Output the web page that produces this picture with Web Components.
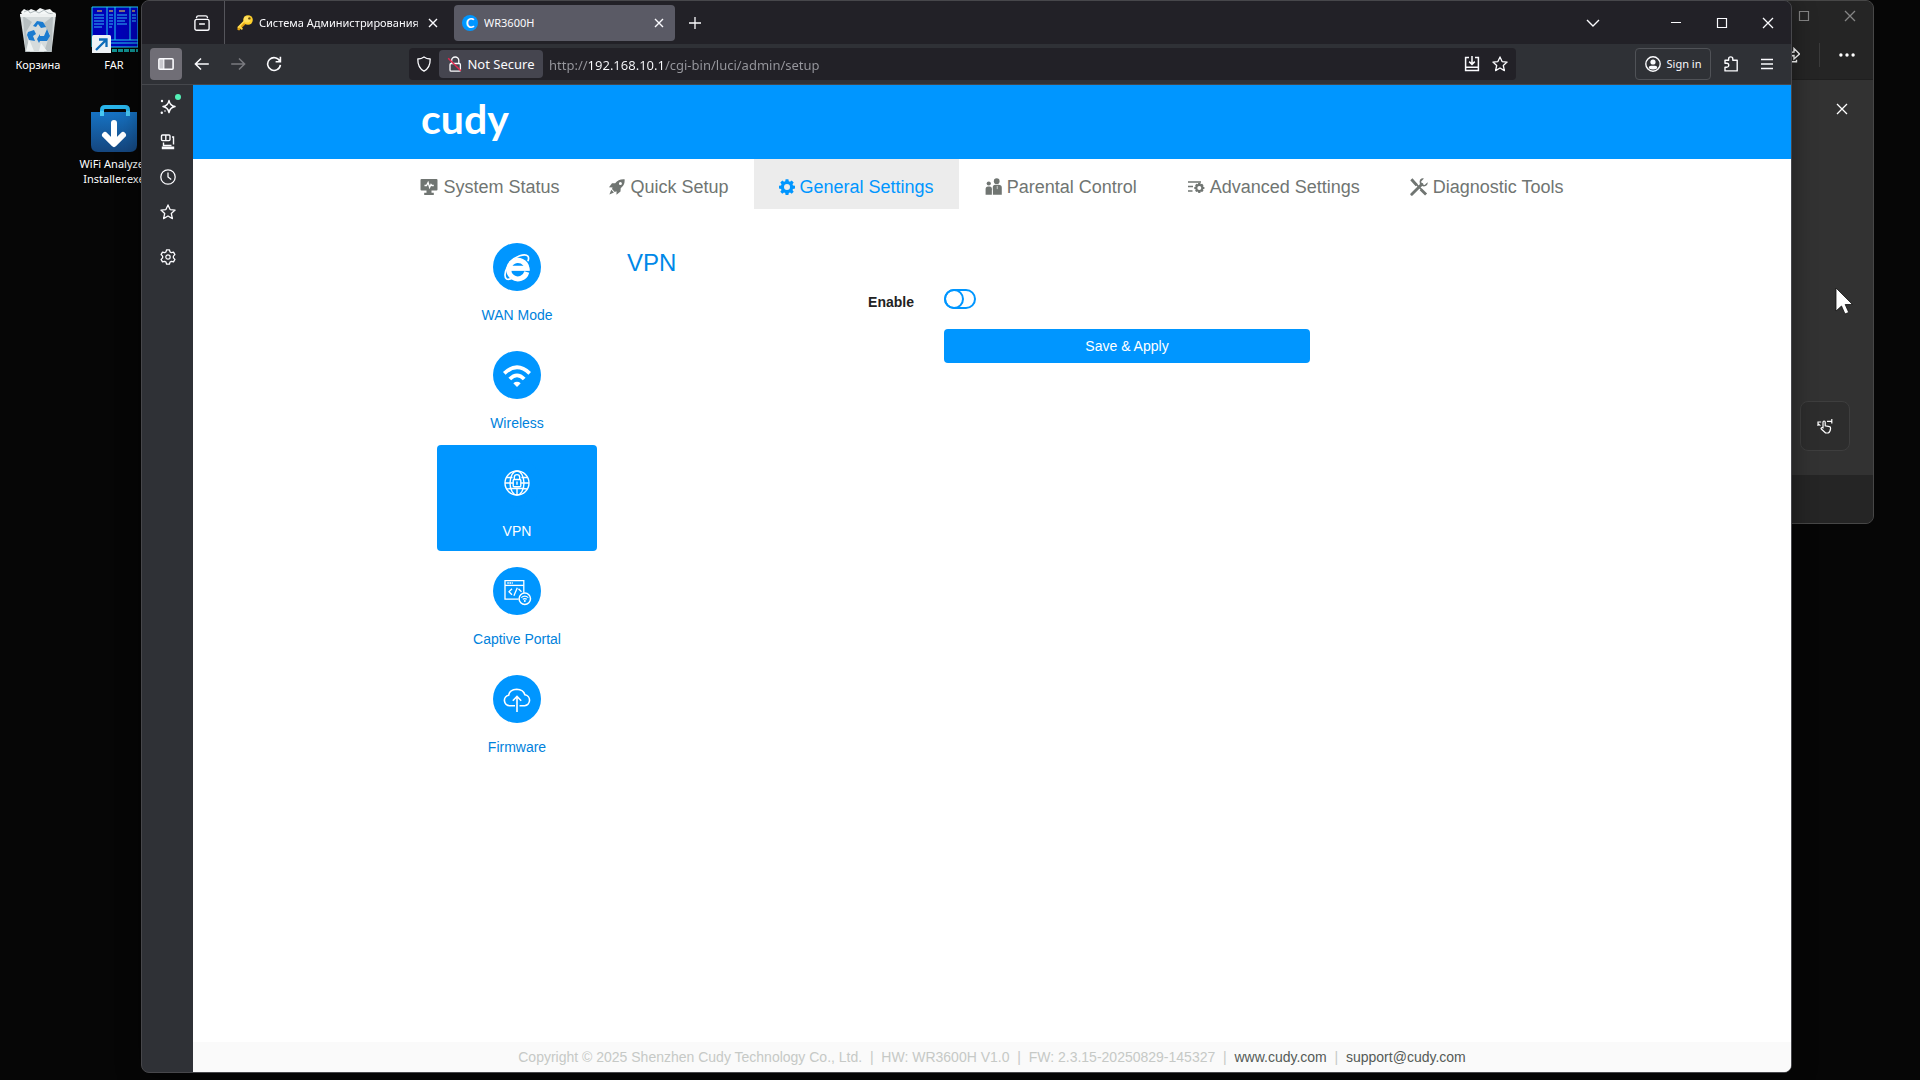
<!DOCTYPE html>
<html lang="ru">
<head>
<meta charset="utf-8">
<meta name="viewport" content="width=device-width, initial-scale=1">
<title>WR3600H</title>
<style>
    html, body {
        height: 100%;
        margin: 0;
        overflow: hidden;
        background: #060606;
    }
    body {
        font-family: "Noto Sans", "Open Sans", sans-serif;
        font-size: 11px;
    }
</style>
</head>
<body>
<desk-top>
    <desk-icon icon="bin" style="left: 0; top: 5px">Корзина</desk-icon>
    <desk-icon icon="far" style="left: 76px; top: 5px">FAR</desk-icon>
    <desk-icon icon="bag" style="left: 76px; top: 104px">WiFi Analyzer Installer.exe</desk-icon>

    <back-window></back-window>

    <browser-window>
        <browser-tab slot="tabs" favicon="key">Система Администрирования</browser-tab>
        <browser-tab slot="tabs" favicon="cudy" active>WR3600H</browser-tab>

        <router-page>
            <nav-item slot="nav" icon="monitor" wide>System Status</nav-item>
            <nav-item slot="nav" icon="rocket">Quick Setup</nav-item>
            <nav-item slot="nav" icon="gear" active>General Settings</nav-item>
            <nav-item slot="nav" icon="people" wide>Parental Control</nav-item>
            <nav-item slot="nav" icon="listgear" wide>Advanced Settings</nav-item>
            <nav-item slot="nav" icon="tools" wide>Diagnostic Tools</nav-item>

            <menu-item slot="menu" icon="ie">WAN Mode</menu-item>
            <menu-item slot="menu" icon="wifi">Wireless</menu-item>
            <menu-item slot="menu" icon="globe" active>VPN</menu-item>
            <menu-item slot="menu" icon="portal">Captive Portal</menu-item>
            <menu-item slot="menu" icon="cloud">Firmware</menu-item>

            <vpn-form></vpn-form>
        </router-page>
    </browser-window>

    <mouse-cursor></mouse-cursor>
</desk-top>

<script>
// icon name -> [viewBox, markup]
const ICONS = {
    // browser chrome
    archive: ['0 0 16 16', '<g fill="none" stroke="currentColor" stroke-width="1.4" stroke-linecap="round"><path d="M2.5 2.6Q2.8 .9 4.2 .9h7.6q1.4 0 1.7 1.7"/><rect x=".9" y="4.4" width="14.2" height="10.8" rx="1.8"/><path d="M5.6 9h4.8"/></g>'],
    panel: ['0 0 16 16', '<path d="M1.5 2.7h4.3v10.6H1.5z" fill="#c9c8ce"/><rect x=".9" y="2.7" width="14.2" height="10.6" rx="1" fill="none" stroke="currentColor" stroke-width="1.6"/><path d="M5.8 3v10" stroke="currentColor" stroke-width="1.2"/>'],
    back: ['0 0 16 16', '<path d="M14.8 8H1.8M7 2.5L1.4 8 7 13.5" fill="none" stroke="currentColor" stroke-width="1.5"/>'],
    forward: ['0 0 16 16', '<path d="M1.2 8h13M9 2.5L14.6 8 9 13.5" fill="none" stroke="currentColor" stroke-width="1.5"/>'],
    reload: ['0 0 16 16', '<path d="M13.8 5.2A6.4 6.4 0 1 0 14.4 8.8M14.4 .8v4.9H9.6" fill="none" stroke="currentColor" stroke-width="1.6"/>'],
    shield: ['0 0 16 16', '<path d="M8 .9c1.7 1.3 3.8 2 6.2 2.1.1 5.3-1.5 9.7-6.2 12.1C3.3 12.7 1.7 8.3 1.8 3 4.2 2.9 6.3 2.200 8 .9z" fill="none" stroke="currentColor" stroke-width="1.3" stroke-linejoin="round"/>'],
    lock: ['0 0 16 16', '<g fill="none" stroke="currentColor" stroke-width="1.3"><path d="M4.6 7.5V4.600a3.600 3.600 0 0 1 7.200 0v2.900"/><rect x="3" y="7.500" width="10.400" height="7.600" rx="1.200"/></g><path d="M1.200 2.200l12.600 12.600" stroke="#e2284f" stroke-width="1.500"/>'],
    save: ['0 0 16 16', '<path d="M5 1.500H1.600v13h12.800v-13H11M1.600 11.300h12.800M8 0v8.200M5.200 5.600L8 8.400l2.800-2.800" fill="none" stroke="currentColor" stroke-width="1.500"/>'],
    star: ['0 0 16 16', '<path d="M8 .9l2.100 4.700 5 .5-3.800 3.400 1.100 5.100L8 12l-4.400 2.600 1.100-5.100L.9 6.100l5-.5z" fill="none" stroke="currentColor" stroke-width="1.300" stroke-linejoin="round"/>'],
    account: ['0 0 16 16', '<circle cx="8" cy="8" r="7.200" fill="none" stroke="currentColor" stroke-width="1.400"/><circle cx="8" cy="6" r="2.600" fill="currentColor"/><path d="M3.600 12.200q.2-2.400 2.400-2.400h4q2.200 0 2.400 2.400Q8 15 3.600 12.200z" fill="currentColor"/>'],
    puzzle: ['0 0 16 16', '<path d="M2 14.900V11.200h1.800a1.900 1.900 0 0 0 0-3.900H2V4.200h3.600V3a2.100 2.100 0 0 1 4.200 0v1.200h4.400v10.700z" fill="none" stroke="currentColor" stroke-width="1.400" stroke-linejoin="round"/>'],
    burger: ['0 0 16 16', '<path d="M2 3.500h12M2 8h12M2 12.500h12" stroke="currentColor" stroke-width="1.300"/>'],
    chevron: ['0 0 16 16', '<path d="M2 5l6 6 6-6" fill="none" stroke="currentColor" stroke-width="1.400"/>'],
    plus: ['0 0 16 16', '<path d="M8 2v12M2 8h12" stroke="currentColor" stroke-width="1.300"/>'],
    close: ['0 0 16 16', '<path d="M3 3l10 10M13 3L3 13" stroke="currentColor" stroke-width="1.300"/>'],
    cross: ['0 0 16 16', '<path d="M4 4l8 8M12 4l-8 8" stroke="currentColor" stroke-width="1.400"/>'],
    minimize: ['0 0 16 16', '<path d="M3 7.500h10" stroke="currentColor" stroke-width="1"/>'],
    maximize: ['0 0 16 16', '<path d="M3.500 3.500h9v9h-9z" fill="none" stroke="currentColor" stroke-width="1.200"/>'],
    spark: ['0 0 16 16', '<path d="M9 1.600q1 5 6 6-5 1-6 6-1-5-6-6 5-1 6-6z" fill="none" stroke="currentColor" stroke-width="1.500" stroke-linejoin="round"/><circle cx="2" cy="2" r="1.200" fill="currentColor"/><circle cx="1.800" cy="13.800" r="1.200" fill="currentColor"/><circle cx="5" cy="12" r=".8" fill="currentColor"/>'],
    devices: ['0 0 16 16', '<g fill="none" stroke="currentColor" stroke-width="1.400"><rect x="1.500" y="1" width="8.500" height="5.600" rx="1"/><path d="M5.800 1v5.600"/><path d="M12 3h1.500v7.500M3.500 8.500v3h8"/></g><path d="M1.800 15.200v-2.600h12.400v2.600z" fill="currentColor"/>'],
    clock: ['0 0 16 16', '<circle cx="8" cy="8" r="7.200" fill="none" stroke="currentColor" stroke-width="1.300"/><path d="M8 3.600V8l3.200 2.600" fill="none" stroke="currentColor" stroke-width="1.300"/>'],
    cog: ['0 0 16 16', '<path d="M6.600 .8h2.800l.6 2.100 1.400.8 2.100-.6 1.400 2.500-1.500 1.500v1.800l1.500 1.500-1.400 2.500-2.100-.6-1.400.8-.6 2.100H6.600L6 13.100l-1.400-.8-2.100.6-1.400-2.500 1.500-1.500V7.100L1.100 5.600l1.400-2.500 2.100.6L6 2.900z" fill="none" stroke="currentColor" stroke-width="1.300" stroke-linejoin="round"/><circle cx="8" cy="8" r="2.200" fill="none" stroke="currentColor" stroke-width="1.200"/>'],
    share: ['0 0 16 16', '<path d="M1 11c1-4 4-6 9-6V1.500L15.500 7 10 12V8.500C6 8.500 3 9 1 11zM2 14.800h10.500v-2" fill="none" stroke="currentColor" stroke-width="1.400"/>'],
    dots: ['0 0 16 16', '<circle cx="1.900" cy="8" r="1.700" fill="currentColor"/><circle cx="8" cy="8" r="1.700" fill="currentColor"/><circle cx="14.100" cy="8" r="1.700" fill="currentColor"/>'],
    hand: ['0 0 16 16', '<path d="M6 9.800V4.200q0-1.200 1.100-1.200t1.100 1.200v3.600l4.200.8q1.400.3 1.200 1.800-.4 3.800-2.400 4.600H8.600Q6.500 13 4.300 11q-.6-.8.2-1.200T6 9.800zM1 5.600V4h3.200M1 5.600l2.400 2M1 5.600v2.400M10 3.400h4.800V1M14.800 3.400v2" fill="none" stroke="currentColor" stroke-width="1.200"/>'],
    key: ['0 0 16 16', '<path d="M9.200 8.400l-7 7-1.800-.6.1-2.400 6.600-6.600z" fill="#e0a010"/><path d="M2.800 11.600l2.600 2.800M1 12.600l7-7" stroke="#ffdc50" stroke-width="1.600"/><circle cx="11" cy="5" r="4.800" fill="#ffd02c"/><circle cx="10" cy="4.400" r="3.200" fill="#ffe774" opacity=".7"/><circle cx="12.400" cy="3.400" r="1.200" fill="#6b4c08"/>'],

    // router page, top navigation
    monitor: ['0 0 18 18', '<path fill="currentColor" fill-rule="evenodd" d="M1.500 1h15q1 0 1 1v9.500q0 1-1 1h-5v2.300h2.300V17H4.200v-2.200h2.300v-2.300h-5q-1 0-1-1V2q0-1 1-1z"/><path d="M4.500 7.500h2l1.600-3 1.500 5 1.400-3 .8 1h2" fill="none" stroke="#fff" stroke-width="1.300"/>'],
    rocket: ['0 0 16 16', '<path fill="currentColor" fill-rule="evenodd" d="M15.600.3Q9.500-.2 6.200 4.200H3L0 8.200l3.600.2L3 10l2.700 3 1.800-.8v3.600l4-3.200.2-3.300Q16.200 6 15.600.3zM11.400 3.100a1.500 1.500 0 1 1 0 3 1.500 1.500 0 0 1 0-3z"/><path d="M2.300 10.800L.4 15.400 5 13.600z" fill="currentColor"/>'],
    gear: ['0 0 16 16', '<path fill="currentColor" fill-rule="evenodd" d="M6.600.2h2.800l.4 2 1.200.5 1.700-1.200 2 2-1.200 1.700.5 1.300 2 .3v2.700l-2 .4-.5 1.200 1.200 1.700-2 2-1.700-1.200-1.200.5-.4 2H6.600l-.4-2-1.200-.5-1.700 1.200-2-2 1.200-1.700L2 9.900l-2-.4V6.800l2-.3.500-1.300L1.300 3.500l2-2L5 2.700l1.200-.5zM8 5.100a3 3 0 1 0 0 6 3 3 0 0 0 0-6z"/>'],
    people: ['-1 0 17 17', '<circle cx="11" cy="3" r="2.700" fill="currentColor"/><circle cx="3.500" cy="5.200" r="2" fill="currentColor"/><path d="M7.300 15.800V9q0-2.600 2.300-2.600h3Q15.800 6.400 15.800 9v6.800zM.5 15.800v-5.200q0-2.600 2.300-2.600h1.600q2.100 0 2.100 2.600v5.200z" fill="currentColor"/><path d="M6.900 16v-4.500M11.500 7.500v3" stroke="#fff" stroke-width=".6"/>'],
    listgear: ['0 0 18 18', '<path d="M1 4h13M1 8.500h5M1 13h4.500" stroke="currentColor" stroke-width="1.700"/><path fill="currentColor" fill-rule="evenodd" d="M11.300 4.800h2l.4 1.500 1.400-.6 1.400 1.500-.7 1.300 1.600.4v2l-1.600.4.7 1.400-1.400 1.400-1.400-.7-.4 1.600h-2l-.4-1.600-1.400.7-1.400-1.400.7-1.400-1.500-.4v-2l1.500-.4-.7-1.300 1.400-1.500 1.400.6zM12.300 7.900a2 2 0 1 0 0 4 2 2 0 0 0 0-4z"/>'],
    tools: ['0 0 16 16', '<path d="M1.200 1.200L6 6.500M9.500 10l4.800 4.700" stroke="currentColor" stroke-width="2.600"/><path d="M5 5l5 5" stroke="currentColor" stroke-width="1.500"/><path d="M1.600 14.400L10.500 5.500" stroke="currentColor" stroke-width="2.600" stroke-linecap="round"/><path d="M15.600 3.700L13 6.200 10.600 5.500 9.900 3 12.400.4Q9.200-.3 8.500 3q0 4 3.900 4.600 3.800-.6 3.200-3.900z" fill="currentColor"/>'],

    // router page, side menu
    ie: ['0 0 48 48', '<path fill="none" stroke="#fff" stroke-width="5" d="M33.800 29A9.200 9.200 0 1 1 34 25.300H18"/><path d="M17 24.300h19.200v3.200H17z" fill="#fff"/><path d="M16.500 19.500C22 13.500 32 9.700 35 13.300q1.200 1.700-.1 5M14.200 24.500C11.300 30 11.500 34.800 13.600 36q2.600 1 6.400-1.500" fill="none" stroke="#fff" stroke-width="1.700"/>'],
    wifi: ['0 0 48 48', '<g fill="none" stroke="#fff" stroke-width="3.800"><path d="M11.300 22.300Q24 10.200 36.700 22.300"/><path d="M16.800 28Q24 20.600 31.200 28"/></g><path d="M20.300 32.200q3.700-2.800 7.400 0L24 36z" fill="#fff"/>'],
    globe: ['0 0 48 48', '<g fill="none" stroke="#fff" stroke-width="1.400"><circle cx="24" cy="24" r="12"/><ellipse cx="24" cy="24" rx="7" ry="12"/><path d="M12 24h8M28 24h8M13.500 18.500h6M28.500 18.500h6M13.500 30q10.500-1.500 21 0M24 29v7"/><path d="M21.300 20.500v-2.200a2.700 2.700 0 0 1 5.400 0v2.200"/><rect x="20.200" y="20.500" width="7.600" height="7.300" rx="1"/><path d="M24 22.500v3.200"/></g>'],
    portal: ['0 0 48 48', '<g fill="none" stroke="#fff" stroke-width="1.300"><path d="M25.500 32.200H12V13.700h18.800v12"/><path d="M12 18.400h18.800"/><path d="M14.300 16.100h5.500" stroke-dasharray="1.500 .7" stroke-width="1.500"/><path d="M19 21.800l-3 3 3 3M24.300 20.800l-3.400 8M25.500 21.800l3 3"/><circle cx="31.800" cy="31.800" r="5.700" stroke-width="1.500"/><path d="M28.300 30.600q3.500-2.800 7 0M29.800 32.300q2-1.500 4 0" stroke-width="1.200"/></g><circle cx="31.800" cy="34" r="1" fill="#fff"/>'],
    cloud: ['0 0 48 48', '<path d="M22 30.700h-5.300a5.300 5.300 0 0 1-1-10.500q.8-5.800 8-6 6.800.2 8.200 5.600a5.500 5.500 0 0 1-.2 10.900H26.500M24 37V22M19.800 25.700L24 21.500l4.200 4.200" fill="none" stroke="#fff" stroke-width="1.600"/>'],

    // desktop
    bin: ['0 0 48 48', '<path d="M7 7L10 4l4 2 3-2 5 2 4-3 5 2 5-1 3 3 3 1-3 4H9z" fill="#f4f7f7"/><path d="M10 7l4-2 2 3 5-2 4 2 5-3 4 3 5 1" fill="none" stroke="#9fa9ad" stroke-width=".8"/><path d="M6 9h36l-4.500 38h-26z" fill="#d5dbdc"/><path d="M9 11l9 6-6 10 4 20h-4.500zM39 11l-10 8 7 10-6 18h7.500z" fill="#b7bfc1"/><path d="M6 9h36l-.5 3h-35z" fill="#eef1f1"/><path d="M15 34l5 12H12zM27 38l6 8h-8z" fill="#eef2f2"/><path d="M19 22l4-5 6 1 3 5-5 1-3-4-2 3zM14 28l6-2 2 4-3 2 2 5-6-1-2-5zM33 25l3 7-3 5h-7l-1 2-2-4 3-5v2h4z" fill="#1b7bd0" transform="translate(0 -1)"/>'],
    far: ['0 0 48 48', '<path d="M2 2h46v40H2z" fill="#0000b8" stroke="#20d0f0"/><path d="M17 2v33M25 2v33M40 2v33M2 35h46M2 38h46" stroke="#20d0f0" fill="none"/><path d="M4 10h10M4 13h10M4 16h10M4 19h10M4 22h8M19 10h4M19 13h4M19 16h4M19 19h4M19 22h3M27 10h10M27 13h10M27 16h8M27 19h10M42 10h4M42 13h4M42 16h4" stroke="#30b8f8"/><path d="M7 6h5M19 6h4M29 6h6M42 6h3" stroke="#ffe040"/><path d="M22 45.500h26" stroke="#109090" stroke-width="3" stroke-dasharray="5 1"/><rect x="2" y="30" width="19" height="19" rx="1.500" fill="#eef2f5"/><path d="M6 45l10-10M9 34.500h7.500V42" fill="none" stroke="#0e6cb8" stroke-width="2.300"/>'],
    bag: ['0 0 48 48', '<defs><linearGradient id="g" x1="0" y1="0" x2="0" y2="1"><stop offset="0" stop-color="#1673c4"/><stop offset="1" stop-color="#15467e"/></linearGradient></defs><path d="M12 12V6q0-3 3-3h20q3 0 3 3v6" fill="none" stroke="#29b4ea" stroke-width="4"/><path d="M1 8h46v33q0 7-7 7H8q-7 0-7-7z" fill="url(#g)"/><path d="M10 12V7h4v5M36 12V7h4v5" fill="#48c8f4"/><path d="M24 19v19M15 31l9 9 9-9" fill="none" stroke="#fff" stroke-width="6" stroke-linecap="round" stroke-linejoin="round"/>']
};

class BaseElement extends HTMLElement {
    constructor() {
        super();
        this.attachShadow({ mode: 'open' });
    }

    connectedCallback() {
        const template = document.createElement('template');
        template.innerHTML = `<style>
            *, *::before { box-sizing: border-box; }
            button { margin: 0; padding: 0; border: 0; background: none; color: inherit; font: inherit; cursor: pointer; }
            a { color: inherit; text-decoration: none; }
        </style>` + this.template();
        this.shadowRoot.replaceChildren(template.content.cloneNode(true));
    }
}

class UiIcon extends BaseElement {
    template() {
        const [box, body] = ICONS[this.getAttribute('name')];
        const size = this.getAttribute('size') || 16;
        return `
            <style>
                :host { display: inline-flex; flex: none; }
                svg { display: block; }
            </style>
            <svg width="${size}" height="${size}" viewBox="${box}" aria-hidden="true">${body}</svg>
        `;
    }
}

class DeskTop extends BaseElement {
    template() {
        return `
            <style>
                :host { display: block; position: relative; height: 100vh; overflow: hidden; color: #fff; }
            </style>
            <slot></slot>
        `;
    }
}

class DeskIcon extends BaseElement {
    template() {
        return `
            <style>
                :host {
                    display: flex;
                    position: absolute;
                    flex-direction: column;
                    align-items: center;
                    gap: 4px;
                    width: 76px;
                    line-height: 15px;
                    text-align: center;
                }
            </style>
            <ui-icon name="${this.getAttribute('icon')}" size="48"></ui-icon>
            <span><slot></slot></span>
        `;
    }
}

// the darker window that stays behind the browser
class BackWindow extends BaseElement {
    template() {
        return `
            <style>
                :host {
                    display: flex;
                    position: absolute;
                    top: 0;
                    right: 46px;
                    flex-direction: column;
                    box-sizing: border-box;
                    width: 50%;
                    height: 524px;
                    border: 1px solid #474747;
                    border-radius: 8px;
                    background: #323232;
                    overflow: hidden;
                }
                .title, .bar { display: flex; justify-content: flex-end; align-items: center; background: #252525; }
                .title { height: 29px; color: #858585; }
                .title button { display: grid; place-items: center; width: 46px; height: 29px; }
                .bar { gap: 19px; height: 50px; padding-right: 18px; border-bottom: 1px solid #1f1f1f; }
                .bar button, .close { display: grid; place-items: center; }
                .rule { width: 1px; height: 24px; background: #3a3a3a; }
                .content { display: flex; flex: 1; flex-direction: column; justify-content: space-between; align-items: flex-end; padding: 21px 23px 24px; }
                .card { display: grid; place-items: center; width: 50px; height: 50px; border: 1px solid #3e3e3e; border-radius: 8px; background: #2d2d2d; }
                .foot { height: 48px; background: #252525; }
            </style>
            <div class="title">
                <button aria-label="Maximize"><ui-icon name="maximize"></ui-icon></button>
                <button aria-label="Close"><ui-icon name="close"></ui-icon></button>
            </div>
            <div class="bar">
                <button aria-label="Share"><ui-icon name="share"></ui-icon></button>
                <span class="rule"></span>
                <button aria-label="More"><ui-icon name="dots"></ui-icon></button>
            </div>
            <div class="content">
                <button class="close" aria-label="Close panel"><ui-icon name="close"></ui-icon></button>
                <button class="card" aria-label="Touch"><ui-icon name="hand"></ui-icon></button>
            </div>
            <div class="foot"></div>
        `;
    }
}

class BrowserTab extends BaseElement {
    template() {
        const favicon = this.getAttribute('favicon');
        return `
            <style>
                :host { display: flex; align-items: center; box-sizing: border-box; width: 221px; height: 36px; padding: 0 4px 0 8px; border-radius: 4px; }
                :host([active]) { background: #5a5a65; }
                :host(:not([active])) { padding-right: 7px; }
                .title { flex: 1; margin-left: 6px; overflow: hidden; white-space: nowrap; }
                :host(:not([active])) .title { -webkit-mask-image: linear-gradient(90deg, #000 95%, transparent); }
                .logo { display: grid; place-items: center; width: 16px; height: 16px; border-radius: 8px; background: #0096ff; font: bold 13px/16px Lato, sans-serif; }
                button { display: grid; place-items: center; width: 24px; height: 24px; }
                :host(:not([active])) button { width: 20px; }
            </style>
            ${favicon === 'cudy' ? '<span class="logo">C</span>' : `<ui-icon name="${favicon}"></ui-icon>`}
            <span class="title"><slot></slot></span>
            <button aria-label="Close tab"><ui-icon name="cross"></ui-icon></button>
        `;
    }
}

class BrowserWindow extends BaseElement {
    template() {
        return `
            <style>
                :host {
                    display: flex;
                    position: absolute;
                    top: 0;
                    right: 128px;
                    bottom: 7px;
                    left: 141px;
                    flex-direction: column;
                    border: 1px solid #47474b;
                    border-radius: 8px;
                    background: #2f3136;
                    color: #fbfbfe;
                    box-sizing: border-box;
                    overflow: hidden;
                    box-shadow: 0 4px 24px rgba(0, 0, 0, 0.4);
                }
                button { display: grid; flex: none; place-items: center; width: 32px; height: 32px; border-radius: 4px; }

                .tabs { display: flex; align-items: center; gap: 4px; height: 43px; background: #222127; }
                .view { display: flex; justify-content: flex-end; align-items: center; width: 83px; height: 43px; padding-right: 6px; border-right: 1px solid #55555b; }
                .drag { flex: 1; }
                .controls { display: flex; margin-left: 40px; }
                .controls button { width: 46px; height: 43px; }

                .toolbar { display: flex; align-items: center; gap: 4px; height: 41px; padding: 0 8px 1px; border-bottom: 1px solid #45474c; }
                .pressed { background: #706e76; }
                .dim { color: #7b7b80; }
                .space { flex: 0 1 111px; }
                .urlbar { display: flex; flex: 1; align-items: center; height: 32px; border-radius: 4px; background: #222127; font-size: 13px; }
                .urlbar .secure { display: flex; justify-content: center; gap: 4px; width: 104px; height: 28px; margin-right: 6px; padding-top: 1px; align-items: center; background: #45454f; white-space: nowrap; }
                .urlbar > button { width: 28px; }
                .urlbar > button:first-child { width: 30px; }
                .urlbar > button:last-child { margin-right: 2px; }
                /* host part of the address is brighter than the rest */
                input {
                    flex: 1;
                    min-width: 0;
                    height: 28px;
                    margin: 0;
                    padding: 2px 0 0;
                    border: 0;
                    outline: 0;
                    background: linear-gradient(90deg, #98989e 39px, #fbfbfe 39px 115px, #98989e 115px);
                    -webkit-background-clip: text;
                    background-clip: text;
                    color: #98989e;
                    -webkit-text-fill-color: transparent;
                    font: inherit;
                }
                .signin { display: flex; justify-content: center; gap: 6px; width: 76px; border: 1px solid #505257; align-items: center; }

                .body { display: flex; flex: 1; min-height: 0; }
                .launcher { display: flex; flex-direction: column; align-items: center; gap: 3px; width: 51px; padding-top: 6px; }
                .launcher button { position: relative; }
                .launcher button:last-child { margin-top: 10px; }
                .badge { position: absolute; top: 3px; right: 3px; width: 6px; height: 6px; border-radius: 3px; background: #54f0b6; }
                .page { flex: 1; min-width: 0; overflow: hidden; background: #fff; }
            </style>
            <div class="tabs">
                <div class="view"><button aria-label="Firefox View"><ui-icon name="archive"></ui-icon></button></div>
                <slot name="tabs"></slot>
                <button aria-label="New tab"><ui-icon name="plus"></ui-icon></button>
                <span class="drag"></span>
                <button aria-label="List all tabs"><ui-icon name="chevron"></ui-icon></button>
                <div class="controls">
                    <button aria-label="Minimize"><ui-icon name="minimize"></ui-icon></button>
                    <button aria-label="Maximize"><ui-icon name="maximize"></ui-icon></button>
                    <button aria-label="Close"><ui-icon name="close"></ui-icon></button>
                </div>
            </div>
            <div class="toolbar">
                <button class="pressed" aria-label="Sidebar"><ui-icon name="panel"></ui-icon></button>
                <button aria-label="Back"><ui-icon name="back"></ui-icon></button>
                <button class="dim" aria-label="Forward"><ui-icon name="forward"></ui-icon></button>
                <button aria-label="Reload"><ui-icon name="reload"></ui-icon></button>
                <span class="space"></span>
                <div class="urlbar">
                    <button aria-label="Tracking protection"><ui-icon name="shield"></ui-icon></button>
                    <button class="secure"><ui-icon name="lock"></ui-icon>Not Secure</button>
                    <input type="text" aria-label="Address" value="http://192.168.10.1/cgi-bin/luci/admin/setup">
                    <button aria-label="Install"><ui-icon name="save"></ui-icon></button>
                    <button aria-label="Bookmark"><ui-icon name="star"></ui-icon></button>
                </div>
                <span class="space"></span>
                <button class="signin"><ui-icon name="account"></ui-icon>Sign in</button>
                <button aria-label="Extensions"><ui-icon name="puzzle"></ui-icon></button>
                <button aria-label="Menu"><ui-icon name="burger"></ui-icon></button>
            </div>
            <div class="body">
                <div class="launcher">
                    <button aria-label="AI chat"><ui-icon name="spark"></ui-icon><span class="badge"></span></button>
                    <button aria-label="Synced tabs"><ui-icon name="devices"></ui-icon></button>
                    <button aria-label="History"><ui-icon name="clock"></ui-icon></button>
                    <button aria-label="Bookmarks"><ui-icon name="star"></ui-icon></button>
                    <button aria-label="Customize"><ui-icon name="cog"></ui-icon></button>
                </div>
                <div class="page"><slot></slot></div>
            </div>
        `;
    }
}

class RouterPage extends BaseElement {
    template() {
        return `
            <style>
                :host {
                    display: flex;
                    flex-direction: column;
                    height: 100%;
                    background: #fff;
                    color: #222;
                    font: 14px/20px "Liberation Sans", Arial, sans-serif;
                }
                header { background: #0096ff; }
                .inner { box-sizing: border-box; width: 100%; max-width: 1192px; margin: 0 auto; }
                .logo { display: block; padding: 10px 25px 16px; color: #fff; font: bold 41px/48px Lato, sans-serif; }
                nav { display: flex; justify-content: center; }
                .content { display: flex; flex: 1; gap: 30px; padding: 20px 0 0 41px; }
                .menu { display: flex; flex-direction: column; gap: 2px; width: 160px; }
                .main { flex: 1; min-width: 0; padding-top: 18px; }
                footer { background: #fafafa; color: #c6c9c6; line-height: 30px; text-align: center; white-space: pre-wrap; }
                footer a { color: #555b57; }
            </style>
            <header><a class="logo inner" href="#">cudy</a></header>
            <nav><slot name="nav"></slot></nav>
            <div class="content inner">
                <div class="menu"><slot name="menu"></slot></div>
                <div class="main"><slot></slot></div>
            </div>
            <footer>Copyright © 2025 Shenzhen Cudy Technology Co., Ltd.  |  HW: WR3600H V1.0  |  FW: 2.3.15-20250829-145327  |  <a href="#">www.cudy.com</a>  |  <a href="#">support@cudy.com</a></footer>
        `;
    }
}

class NavItem extends BaseElement {
    template() {
        const size = this.hasAttribute('wide') ? 18 : 16;
        return `
            <style>
                :host { display: block; color: #707572; }
                :host([active]) { background: #ececec; color: #0096ff; }
                a { display: flex; align-items: center; gap: 5px; height: 50px; padding: 6px 25px 0; font-size: 18px; line-height: 24px; white-space: nowrap; }
            </style>
            <a href="#"><ui-icon name="${this.getAttribute('icon')}" size="${size}"></ui-icon><span><slot></slot></span></a>
        `;
    }
}

class MenuItem extends BaseElement {
    template() {
        return `
            <style>
                :host { display: block; border-radius: 4px; color: #0082dc; }
                :host([active]) { background: #0096ff; color: #fff; }
                a { display: flex; flex-direction: column; align-items: center; gap: 14px; padding: 14px 0 10px; }
                ui-icon { border-radius: 24px; background: #0096ff; }
            </style>
            <a href="#"><ui-icon name="${this.getAttribute('icon')}" size="48"></ui-icon><span><slot></slot></span></a>
        `;
    }
}

class VpnForm extends BaseElement {
    template() {
        return `
            <style>
                :host { display: block; }
                h2 { margin: 0 0 10px; color: #0088e8; font-size: 24px; font-weight: normal; line-height: 32px; }
                form { display: grid; grid-template-columns: minmax(0, 287px) minmax(0, 366px); gap: 18px 30px; }
                label { padding-top: 4px; font-weight: bold; line-height: 18px; text-align: right; }
                input { appearance: none; width: 32px; height: 20px; margin: 0; border: 2px solid #0096ff; border-radius: 10px; cursor: pointer; }
                input::before { content: ""; display: block; width: 20px; height: 20px; margin: -2px; border: 2px solid #0096ff; border-radius: 10px; }
                input:checked::before { margin-left: 10px; }
                form button { grid-column: 2; height: 34px; border-radius: 4px; background: #0096ff; color: #fff; }
            </style>
            <h2>VPN</h2>
            <form>
                <label for="enable">Enable</label>
                <input id="enable" type="checkbox">
                <button type="button">Save &amp; Apply</button>
            </form>
        `;
    }
}

class MouseCursor extends BaseElement {
    template() {
        return `
            <style>
                :host { display: block; position: absolute; top: 287px; right: 66px; pointer-events: none; }
                svg { display: block; }
            </style>
            <svg width="19" height="28" viewBox="0 0 19 28"><path d="M1 1v23l5.500-5 3.500 8 3.700-1.600L10.200 17.500H17.500z" fill="#fff" stroke="#111" stroke-width=".8"/></svg>
        `;
    }
}

customElements.define('ui-icon', UiIcon);
customElements.define('desk-top', DeskTop);
customElements.define('desk-icon', DeskIcon);
customElements.define('back-window', BackWindow);
customElements.define('browser-tab', BrowserTab);
customElements.define('browser-window', BrowserWindow);
customElements.define('router-page', RouterPage);
customElements.define('nav-item', NavItem);
customElements.define('menu-item', MenuItem);
customElements.define('vpn-form', VpnForm);
customElements.define('mouse-cursor', MouseCursor);
</script>
</body>
</html>
